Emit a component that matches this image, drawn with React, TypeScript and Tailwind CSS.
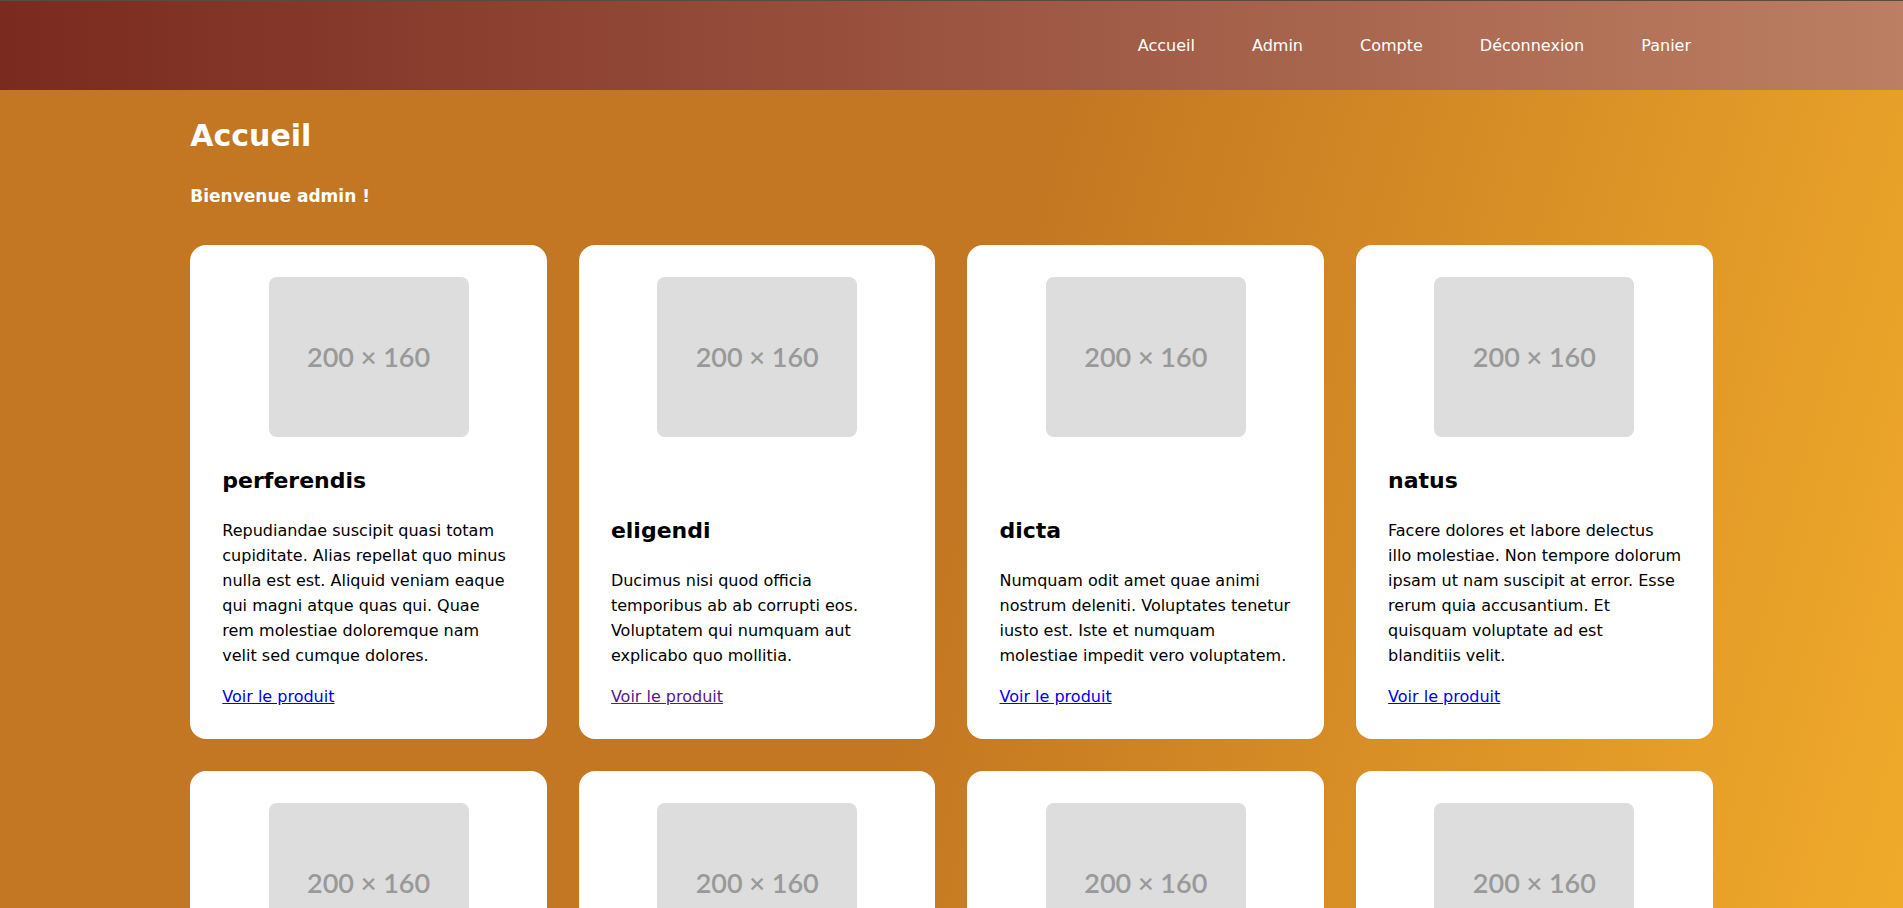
// Accueil — grille de produits (page admin)
const NAV = ["Accueil", "Admin", "Compte", "Déconnexion", "Panier"];

// description découpée comme dans la maquette (une entrée = une ligne)
type Product = { name: string; lines: string[]; visited?: boolean };

const PRODUCTS: Product[] = [
  {
    name: "perferendis",
    lines: [
      "Repudiandae suscipit quasi totam",
      "cupiditate. Alias repellat quo minus",
      "nulla est est. Aliquid veniam eaque",
      "qui magni atque quas qui. Quae",
      "rem molestiae doloremque nam",
      "velit sed cumque dolores.",
    ],
  },
  {
    name: "eligendi",
    lines: [
      "Ducimus nisi quod officia",
      "temporibus ab ab corrupti eos.",
      "Voluptatem qui numquam aut",
      "explicabo quo mollitia.",
    ],
    visited: true,
  },
  {
    name: "dicta",
    lines: [
      "Numquam odit amet quae animi",
      "nostrum deleniti. Voluptates tenetur",
      "iusto est. Iste et numquam",
      "molestiae impedit vero voluptatem.",
    ],
  },
  {
    name: "natus",
    lines: [
      "Facere dolores et labore delectus",
      "illo molestiae. Non tempore dolorum",
      "ipsam ut nam suscipit at error. Esse",
      "rerum quia accusantium. Et",
      "quisquam voluptate ad est",
      "blanditiis velit.",
    ],
  },
  { name: "voluptas", lines: ["Sint quia aut et dolorem. Omnis", "eos rerum facilis quis."] },
  { name: "quibusdam", lines: ["Aut ut repellendus consequatur.", "Dolorem sed est qui illum."] },
  { name: "molestias", lines: ["Officiis nihil atque eum dolor.", "Nemo tempora aut et quia."] },
  { name: "tempora", lines: ["Et est laboriosam minus vel.", "Ipsa quod sit quia aliquam."] },
];

function Placeholder() {
  return (
    <div className="mx-auto flex h-[160px] w-[200px] items-center justify-center rounded-lg bg-[#dddddd]">
      <span className="font-['Lato',sans-serif] text-[27px] font-semibold text-[#999999]">200 × 160</span>
    </div>
  );
}

function ProductCard({ p }: { p: Product }) {
  return (
    <div className="flex flex-col rounded-2xl bg-white px-8 pt-8 pb-[30px]">
      <Placeholder />
      <div className="mt-auto pt-[28px]">
        <h3 className="text-[22px] leading-8 font-bold text-black">{p.name}</h3>
        <p className="mt-[21px] text-base leading-[25px] text-black">
          {p.lines.map((l, i) => (
            <span key={i} className="block whitespace-nowrap">
              {l}
            </span>
          ))}
        </p>
        <a
          href="#"
          className={`mt-4 block w-fit text-base leading-[25px] underline ${p.visited ? "text-[#551a8b]" : "text-[#0000ee]"}`}
        >
          Voir le produit
        </a>
      </div>
    </div>
  );
}

export default function App() {
  return (
    <div className="flex h-screen flex-col overflow-hidden font-['DejaVu_Sans',sans-serif]">
      <header className="flex h-[90px] shrink-0 items-center justify-end border-t border-[#5b4a44] bg-[linear-gradient(90deg,#7a2a1e,#bc7f63)] pr-[212px]">
        <nav className="flex gap-[57px]">
          {NAV.map((item) => (
            <a key={item} href="#" className="text-base leading-6 text-white">
              {item}
            </a>
          ))}
        </nav>
      </header>

      <main className="flex-1 bg-[linear-gradient(105deg,#c37722_48.5%,#f3ae2b_100%)] pt-[26px]">
        <div className="mx-auto w-[80%]">
          <h1 className="text-[30px] leading-10 font-bold text-white">Accueil</h1>
          <h3 className="mt-[28px] text-[17px] leading-6 font-bold text-white">Bienvenue admin !</h3>

          <div className="mt-[37px] grid grid-cols-4 gap-8">
            {PRODUCTS.map((p) => (
              <ProductCard key={p.name} p={p} />
            ))}
          </div>
        </div>
      </main>
    </div>
  );
}
